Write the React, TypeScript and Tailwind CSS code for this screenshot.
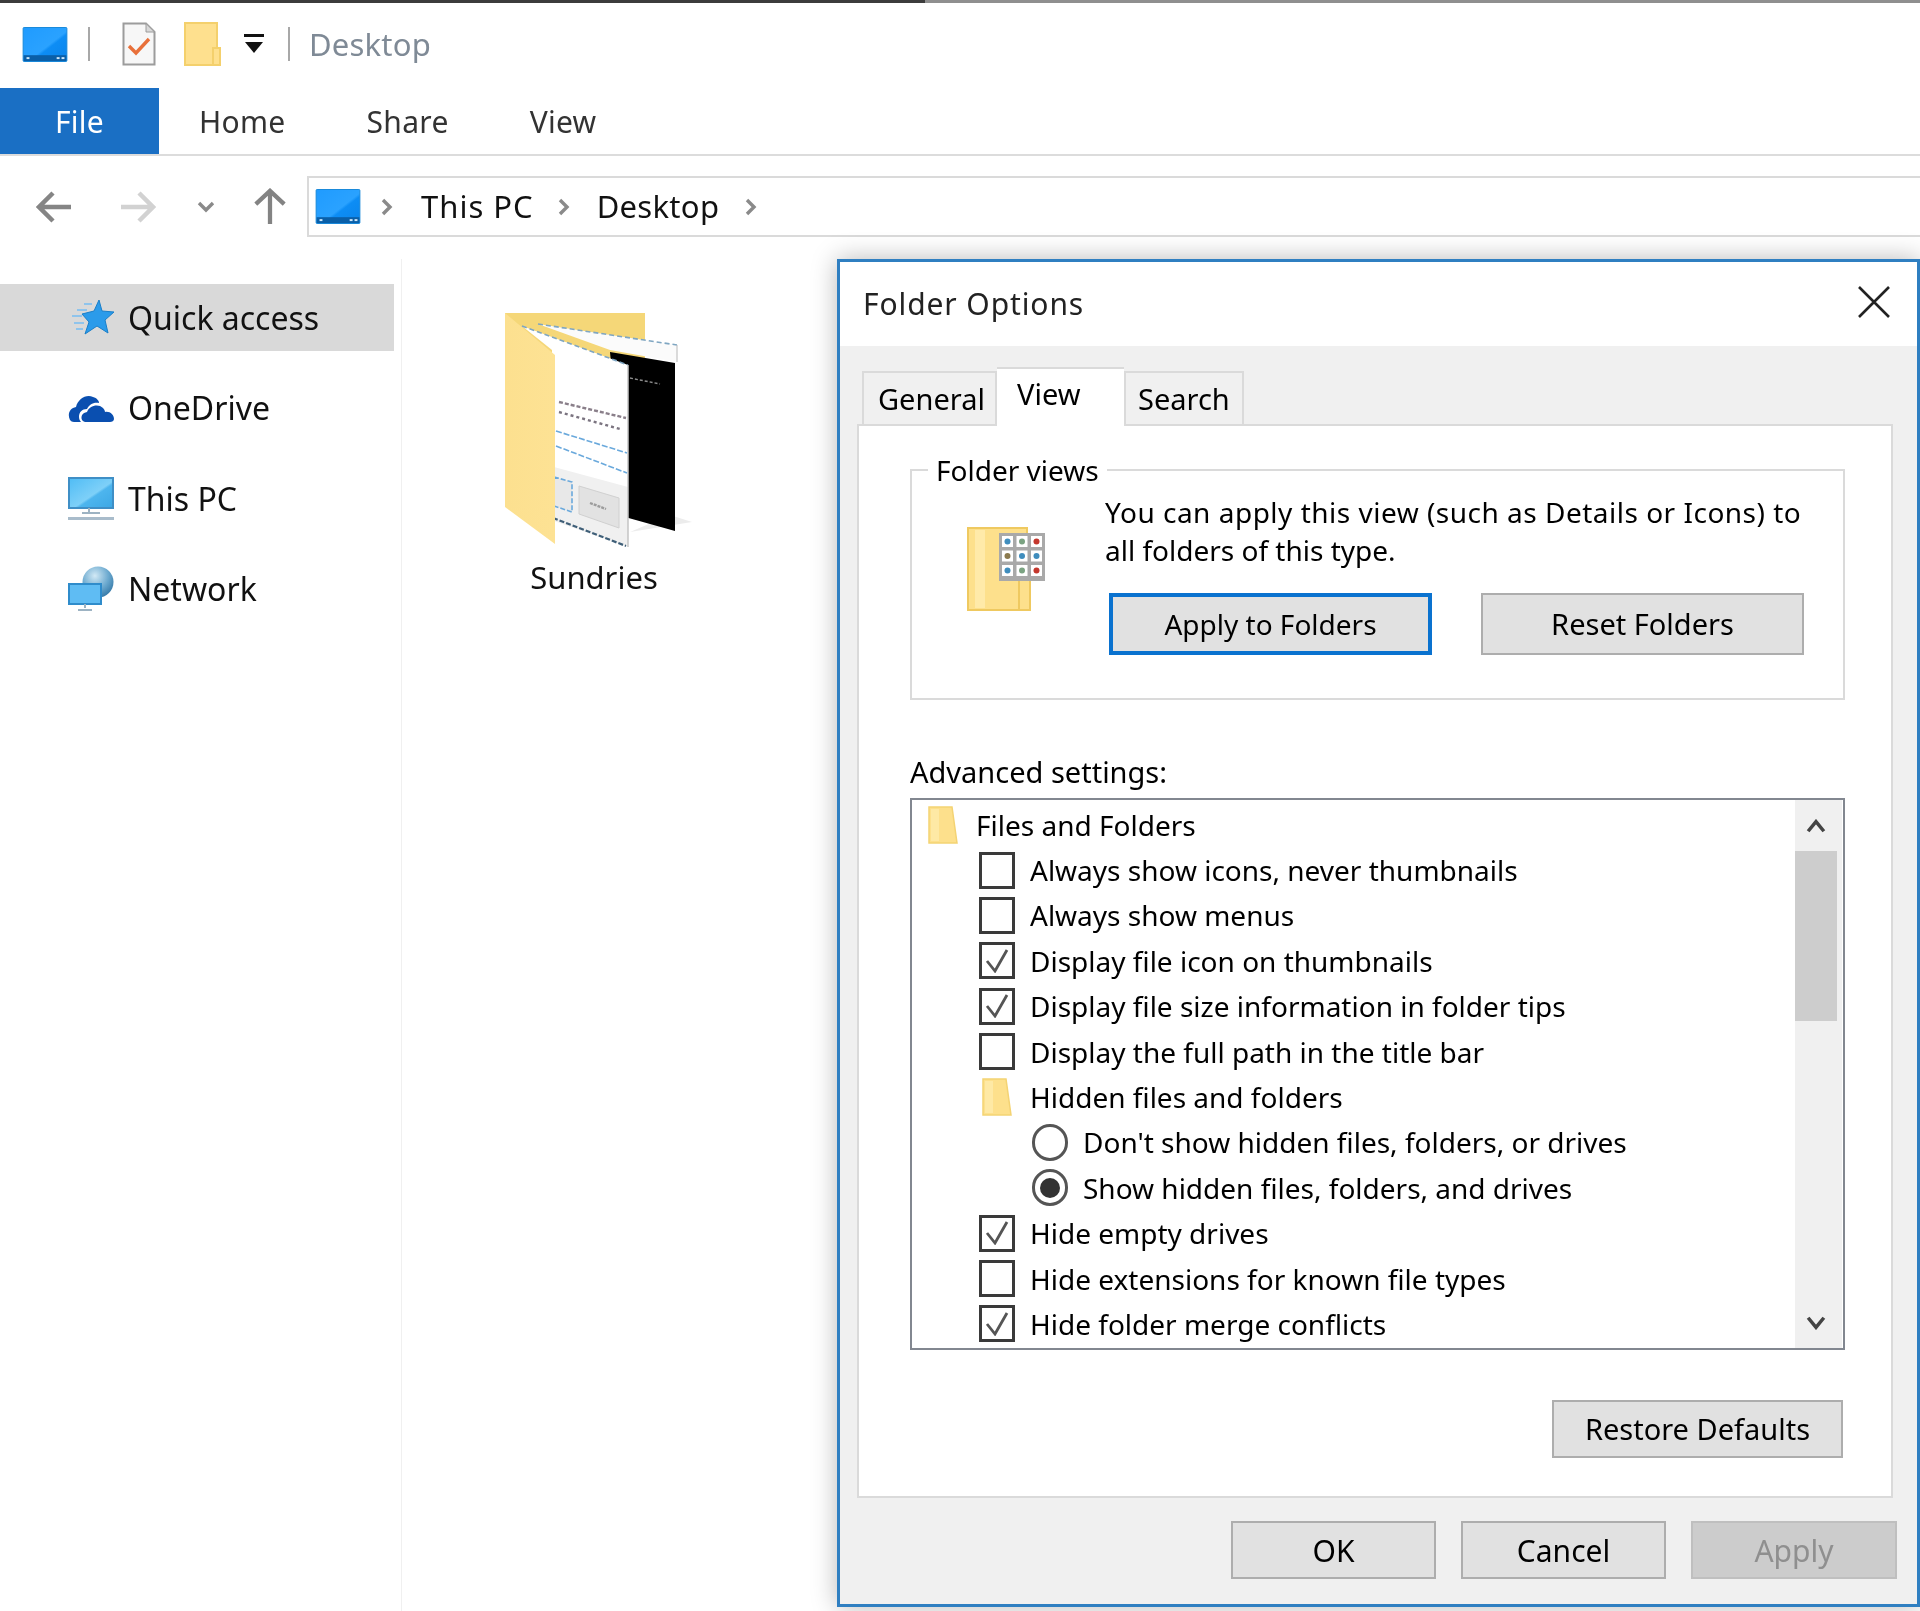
import React from "react";

const PcIcon = ({ className }: { className: string }) => (
  <svg viewBox="0 0 46 36" className={className}>
    <defs>
      <linearGradient id="pcFill" x1="0" y1="0" x2="1" y2="1">
        <stop offset="0" stopColor="#1f9bff" />
        <stop offset="0.55" stopColor="#2aa2ff" />
        <stop offset="0.6" stopColor="#0d8df5" />
        <stop offset="1" stopColor="#0b84ea" />
      </linearGradient>
    </defs>
    <rect x="0.5" y="0.5" width="45" height="35" rx="1" fill="url(#pcFill)" stroke="#1687d9" />
    <rect x="1" y="29" width="44" height="6" fill="#0a5fa8" />
    <rect x="4" y="31" width="3" height="2" fill="#cfe8fb" />
    <rect x="35" y="31" width="3" height="2" fill="#cfe8fb" />
    <rect x="40" y="31" width="3" height="2" fill="#cfe8fb" />
  </svg>
);

const DocCheckIcon = () => (
  <svg viewBox="0 0 34 44" className="w-[34px] h-[44px]">
    <path d="M1.5 1.5H24L32.5 10V42.5H1.5Z" fill="#f7f7f7" stroke="#9c9c9c" strokeWidth="2" />
    <path d="M24 1.5V10H32.5Z" fill="#d9d9d9" stroke="#9c9c9c" strokeWidth="1" />
    <path d="M7 24L14 31L27 17" fill="none" stroke="#e8703a" strokeWidth="3.4" />
  </svg>
);

const TallFolder = ({ className }: { className: string }) => (
  <svg viewBox="0 0 37 44" className={className} preserveAspectRatio="none">
    <path d="M1 1H33V26H36V43H1Z" fill="#fee08e" stroke="#f4d06c" strokeWidth="2" />
    <path d="M33 26H29V43" fill="none" stroke="#f4d06c" strokeWidth="2" />
  </svg>
);

const DropdownIcon = () => (
  <svg viewBox="0 0 22 20" className="w-[22px] h-[20px]">
    <rect x="1" y="0" width="20" height="3" fill="#111" />
    <path d="M2 8H20L11 19Z" fill="#111" />
  </svg>
);

const Arrow = ({ color, flip }: { color: string; flip?: boolean }) => (
  <svg viewBox="0 0 36 34" className={`w-9 h-[34px] ${flip ? "rotate-180" : ""}`}>
    <path d="M17 3L3 17L17 31M3 17H35" fill="none" stroke={color} strokeWidth="4.5" />
  </svg>
);

const UpArrow = () => (
  <svg viewBox="0 0 36 38" className="w-9 h-[36px] mb-[2px]">
    <path d="M3 17L18 3L33 17M18 3V38" fill="none" stroke="#838383" strokeWidth="4.5" />
  </svg>
);

const Caret = ({ down, color = "#8a8a8a" }: { down?: boolean; color?: string }) => (
  <svg viewBox="0 0 12 18" className={down ? "w-[12px] h-[18px] rotate-90" : "w-[12px] h-[18px]"}>
    <path d="M2 2L9 9L2 16" fill="none" stroke={color} strokeWidth="3.4" />
  </svg>
);

const StarIcon = () => (
  <svg viewBox="0 0 46 40" className="w-[46px] h-10">
    <path d="M31 2L34 13L46 14L37 22L40 35L29 28L17 36L21 24L14 16L26 13Z" fill="#2b9bea" stroke="#1a7fc9" strokeWidth="1" />
    <path d="M24 6H16M19 12H9M14 18H4M16 25H6M15 31H8" stroke="#8fc4ec" strokeWidth="2" />
  </svg>
);

const CloudIcon = () => (
  <svg viewBox="0 0 46 30" className="w-[46px] h-[30px]">
    <path d="M2 27C-1 21 2 15 8 14C10 6 18 1 25 4C29 5 31 8 31 10C25 9 21 12 19 16C14 16 11 19 11 24C11 26 12 28 13 29H6C4 29 3 28 2 27Z" fill="#0a4fb0" />
    <path d="M17 29C12 28 12 20 19 19C21 13 30 10 35 15C37 17 37 19 37 19C42 18 46 22 46 26C46 28 44 29 42 29Z" fill="#0a4fb0" />
  </svg>
);

const MonitorIcon = () => (
  <svg viewBox="0 0 46 44" className="w-[46px] h-[44px]">
    <defs>
      <linearGradient id="monFill" x1="0" y1="0" x2="1" y2="1">
        <stop offset="0" stopColor="#4fbcf5" />
        <stop offset="0.55" stopColor="#7ed0f8" />
        <stop offset="0.6" stopColor="#4db5ee" />
        <stop offset="1" stopColor="#3ca7e4" />
      </linearGradient>
    </defs>
    <rect x="1" y="1" width="44" height="30" fill="url(#monFill)" stroke="#3f8fc6" strokeWidth="2" />
    <path d="M21 31V35M14 36H32" stroke="#9db3c3" strokeWidth="2" />
    <rect x="0" y="40" width="46" height="3" fill="#a9bccb" />
  </svg>
);

const NetworkIcon = () => (
  <svg viewBox="0 0 46 46" className="w-[46px] h-[46px]">
    <defs>
      <radialGradient id="globeFill" cx="0.4" cy="0.3" r="0.8">
        <stop offset="0" stopColor="#d2e9f5" />
        <stop offset="0.55" stopColor="#6ba9cf" />
        <stop offset="1" stopColor="#2a6f9f" />
      </radialGradient>
    </defs>
    <circle cx="30" cy="16" r="15.5" fill="url(#globeFill)" />
    <rect x="1" y="18" width="32" height="20" fill="#5fbcf3" stroke="#2f8ccb" strokeWidth="2" />
    <path d="M17 38V42M10 44H24" stroke="#9db3c3" strokeWidth="2" />
  </svg>
);

const ThumbFolder = () => (
  <svg viewBox="0 0 240 258" className="w-[240px] h-[258px] blur-[0.6px]">
    <defs>
      <linearGradient id="flap" x1="0" y1="0" x2="1" y2="0">
        <stop offset="0" stopColor="#fce08f" />
        <stop offset="1" stopColor="#fde294" />
      </linearGradient>
    </defs>
    <path d="M150 242L212 232L190 225Z" fill="#ececec" />
    <path d="M25 23H165V90H25Z" fill="#f5d778" />
    <path d="M58 34L197 55V72L130 60Z" fill="#fbfbfb" />
    <path d="M58 34L197 55" stroke="#7fa6c2" strokeWidth="1.6" strokeDasharray="5 3" />
    <path d="M197 55V72" stroke="#b8b8b8" strokeWidth="1" />
    <path d="M130 62L195 73V241L145 227Z" fill="#000" />
    <path d="M150 88L180 94" stroke="#8c8c8c" strokeWidth="1.4" strokeDasharray="3 2" />
    <path d="M42 36L148 75V257L72 231V60Z" fill="#fff" />
    <path d="M74 177L148 197V257L74 231Z" fill="#f0f0f0" />
    <path d="M42 36L148 75" stroke="#7fa6c2" strokeWidth="1.6" strokeDasharray="5 3" />
    <path d="M73 228L146 256" stroke="#3f5f78" strokeWidth="2.2" strokeDasharray="5 2" />
    <path d="M148 75V257" stroke="#c4c4c4" strokeWidth="1.5" />
    <path d="M79 112L146 128" stroke="#8a7f8a" strokeWidth="2.4" strokeDasharray="4 2" />
    <path d="M79 122L140 139" stroke="#7b7480" strokeWidth="2.4" strokeDasharray="3 3" />
    <path d="M76 141L147 163" stroke="#6aa9dc" strokeWidth="1.6" strokeDasharray="6 2" />
    <path d="M76 156L147 183" stroke="#6aa9dc" strokeWidth="1.6" strokeDasharray="6 2" />
    <path d="M74 187L92 192V222L74 216Z" fill="#e8e8e8" stroke="#6aa9dc" strokeWidth="1.6" strokeDasharray="5 2" />
    <path d="M99 196L139 208V238L99 224Z" fill="#e2e2e2" stroke="#d0d0d0" />
    <path d="M110 213L126 219" stroke="#9c9c9c" strokeWidth="2.4" strokeDasharray="3 1" />
    <path d="M25 23L75 65V254L25 217Z" fill="url(#flap)" />
  </svg>
);

const ViewFolderIcon = () => (
  <svg viewBox="0 0 78 84" className="w-[78px] h-[84px] blur-[0.4px]">
    <path d="M1 1H60V30H63V83H1Z" fill="#fde08c" stroke="#efc960" strokeWidth="2" />
    <rect x="8" y="3" width="10" height="78" fill="#ffeeb5" opacity="0.7" />
    <path d="M52 50V83" stroke="#efc960" strokeWidth="2" />
    <rect x="32" y="6" width="46" height="48" fill="#a9a9a9" />
    {[0, 1, 2].flatMap((r) =>
      [0, 1, 2].map((c) => (
        <g key={`${r}-${c}`}>
          <rect x={35 + c * 14.5} y={9 + r * 14.5} width="11" height="11" fill="#fff" />
          <circle cx={40.5 + c * 14.5} cy={14.5 + r * 14.5} r="3" fill={c === 2 && r !== 1 ? "#c4372d" : r === 1 && c === 0 ? "#8b7a4f" : c === 1 && r !== 1 ? "#7ba382" : "#3f8dbd"} />
        </g>
      ))
    )}
  </svg>
);

const SmallFolder = () => (
  <svg viewBox="0 0 30 38" className="w-[30px] h-[38px]">
    <path d="M1 1H24L29 37H1Z" fill="#fde08c" stroke="#f4d373" strokeWidth="1.5" />
    <rect x="3" y="3" width="8" height="32" fill="#ffeeb5" opacity="0.6" />
  </svg>
);

const Checkbox = ({ on }: { on?: boolean }) => (
  <div className="w-9 h-[37px] border-[3px] border-[#3a3a3a] bg-white flex items-center justify-center shrink-0">
    {on && (
      <svg viewBox="0 0 24 24" className="w-6 h-6">
        <path d="M2 12L10 22L22 1" fill="none" stroke="#555" strokeWidth="2.8" />
      </svg>
    )}
  </div>
);

const Radio = ({ on }: { on?: boolean }) => (
  <div className="w-9 h-[37px] rounded-full border-[3px] border-[#555] bg-white flex items-center justify-center shrink-0">
    {on && <div className="w-5 h-5 rounded-full bg-[#333]" />}
  </div>
);

type Row = { kind: "folder" | "check" | "radio"; level: number; label: string; on?: boolean };

const ROWS: Row[] = [
  { kind: "folder", level: 0, label: "Files and Folders" },
  { kind: "check", level: 1, label: "Always show icons, never thumbnails" },
  { kind: "check", level: 1, label: "Always show menus" },
  { kind: "check", level: 1, label: "Display file icon on thumbnails", on: true },
  { kind: "check", level: 1, label: "Display file size information in folder tips", on: true },
  { kind: "check", level: 1, label: "Display the full path in the title bar" },
  { kind: "folder", level: 1, label: "Hidden files and folders" },
  { kind: "radio", level: 2, label: "Don't show hidden files, folders, or drives" },
  { kind: "radio", level: 2, label: "Show hidden files, folders, and drives", on: true },
  { kind: "check", level: 1, label: "Hide empty drives", on: true },
  { kind: "check", level: 1, label: "Hide extensions for known file types" },
  { kind: "check", level: 1, label: "Hide folder merge conflicts", on: true },
];

const INDENT = ["pl-[13px]", "pl-[67px]", "pl-[120px]"];

const NAV_ITEMS = [
  { label: "OneDrive", icon: <CloudIcon /> },
  { label: "This PC", icon: <MonitorIcon /> },
  { label: "Network", icon: <NetworkIcon /> },
];

const dialogBtn =
  "h-[58px] border-2 border-[#adadad] bg-[#e1e1e1] text-black text-[29px] flex items-center justify-center";

export default function App() {
  return (
    <div
      className="w-[1920px] h-[1611px] relative overflow-hidden bg-white blur-[0.5px]"
      style={{ fontFamily: '"Noto Sans", "Open Sans", sans-serif' }}
    >
      {/* window top edge */}
      <div className="flex h-[3px]">
        <div className="w-[925px] bg-[#3c3c3c]" />
        <div className="flex-1 bg-[#8f8f8f]" />
      </div>

      {/* quick access toolbar */}
      <div className="h-[85px] flex items-center pl-[22px] pb-[3px]">
        <PcIcon className="w-[46px] h-[35px]" />
        <div className="w-[2px] h-[34px] bg-[#a8a8a8] ml-[20px]" />
        <div className="ml-[32px]">
          <DocCheckIcon />
        </div>
        <TallFolder className="w-[37px] h-[44px] ml-[28px]" />
        <div className="ml-[22px]">
          <DropdownIcon />
        </div>
        <div className="w-[2px] h-[34px] bg-[#a8a8a8] ml-[23px]" />
        <span className="ml-[19px] text-[31px] text-[#7f8a96] tracking-[0.2px]">Desktop</span>
      </div>

      {/* ribbon tabs */}
      <div className="h-[68px] flex border-b-2 border-[#dcdcdc] text-[30px] tracking-[0.3px] text-[#333]">
        <div className="w-[159px] bg-[#1a6fc4] text-white flex items-center justify-center">File</div>
        <div className="flex items-center pl-[40px] gap-[81px]">
          <span>Home</span>
          <span>Share</span>
          <span>View</span>
        </div>
      </div>

      {/* address row */}
      <div className="h-[103px] flex items-start pt-[20px]">
        <div className="w-[307px] h-[61px] flex items-center pl-[36px]">
          <Arrow color="#858585" />
          <div className="ml-[48px]">
            <Arrow color="#d2d2d2" flip />
          </div>
          <div className="ml-[44px]">
            <Caret down />
          </div>
          <div className="ml-[40px]">
            <UpArrow />
          </div>
        </div>
        <div className="flex-1 h-[61px] border-2 border-r-0 border-[#dadada] flex items-center pl-[6px] text-[31px] tracking-[0.3px] text-[#111]">
          <PcIcon className="w-[46px] h-[35px]" />
          <div className="ml-[20px]">
            <Caret />
          </div>
          <span className="ml-[28px] tracking-[1px]">This PC</span>
          <div className="ml-[24px]">
            <Caret />
          </div>
          <span className="ml-[27px]">Desktop</span>
          <div className="ml-[26px]">
            <Caret />
          </div>
        </div>
      </div>

      {/* explorer body */}
      <div className="flex">
        <div className="w-[402px] h-[1352px] border-r border-[#f0f0f0] pt-[25px] pr-[7px] flex flex-col gap-[23.5px] text-[32px] text-[#111]">
          <div className="h-[67px] bg-[#d9d9d9] flex items-center pl-[68px] gap-[14px]">
            <StarIcon />
            <span>Quick access</span>
          </div>
          {NAV_ITEMS.map((item) => (
            <div key={item.label} className="h-[67px] flex items-center pl-[68px] gap-[14px]">
              {item.icon}
              <span>{item.label}</span>
            </div>
          ))}
        </div>
        <div className="pl-[78px] pt-[31px]">
          <ThumbFolder />
          <div className="w-[228px] text-center text-[31px] text-[#111] mt-[6px]">Sundries</div>
        </div>
      </div>

      {/* Folder Options dialog */}
      <div className="absolute left-[837px] top-[259px] w-[1083px] h-[1348px] border-[3px] border-[#2f7fc1] bg-[#f0f0f0] shadow-[0_0_24px_rgba(0,0,0,0.28)] flex flex-col text-[28px] text-black">
        <div className="h-[84px] bg-white flex items-center justify-between pl-[23px] pr-[26px] shrink-0">
          <span className="text-[#222] text-[30px] tracking-[0.9px] mb-[2px]">Folder Options</span>
          <svg viewBox="0 0 34 34" className="w-[34px] h-[34px] mb-[4px]">
            <path d="M2 2L32 32M32 2L2 32" stroke="#222" strokeWidth="2.6" />
          </svg>
        </div>

        <div className="flex items-end h-[78px] pl-[22px] shrink-0 text-[29px]">
          <div className="h-[53px] w-[135px] border-2 border-b-0 border-[#dadada] flex items-center pl-[14px]">General</div>
          <div className="h-[59px] w-[127px] bg-white border-t-2 border-[#dadada] flex items-start pl-[20px] pt-[3px] -mb-[2px] relative">View</div>
          <div className="h-[53px] w-[120px] border-2 border-b-0 border-[#dadada] flex items-center pl-[12px]">Search</div>
        </div>

        <div className="w-[1036px] h-[1074px] ml-[17px] border-2 border-[#dadada] bg-white pl-[51px] flex flex-col shrink-0">
          <div className="relative h-[231px] w-[935px] mt-[43px] border-2 border-[#dadada] flex pl-[55px] shrink-0">
            <span className="absolute left-[16px] -top-[19px] bg-white px-[8px] leading-[36px]">Folder views</span>
            <div className="pt-[56px]">
              <ViewFolderIcon />
            </div>
            <div className="ml-[60px] pt-[22px]">
              <p className="leading-[38px] whitespace-nowrap tracking-[0.5px]">You can apply this view (such as Details or Icons) to</p>
              <p className="leading-[38px]">all folders of this type.</p>
              <div className="flex gap-[49px] mt-[24px] ml-[4px]">
                <div className={`${dialogBtn} !h-[62px] w-[323px] !border-[4px] !border-[#0a72cf] !text-[28px]`}>Apply to Folders</div>
                <div className={`${dialogBtn} !h-[62px] w-[323px]`}>Reset Folders</div>
              </div>
            </div>
          </div>

          <div className="leading-[36px] mt-[54px] text-[29px]">Advanced settings:</div>

          <div className="w-[935px] h-[552px] mt-[8px] border-2 border-[#828790] flex shrink-0">
            <div className="flex-1 pt-[2px] overflow-hidden">
              {ROWS.map((row) => (
                <div key={row.label} className={`h-[45.4px] flex items-center gap-[15px] whitespace-nowrap ${INDENT[row.level]}`}>
                  <div className="w-9 flex justify-center shrink-0">
                    {row.kind === "folder" && <SmallFolder />}
                    {row.kind === "check" && <Checkbox on={row.on} />}
                    {row.kind === "radio" && <Radio on={row.on} />}
                  </div>
                  <span>{row.label}</span>
                </div>
              ))}
            </div>
            <div className="w-[47px] mr-[1px] bg-[#f0f0f0] flex flex-col">
              <div className="h-[51px] w-[42px] flex items-center justify-center">
                <svg viewBox="0 0 22 16" className="w-[20px] h-[14px]">
                  <path d="M2 14L11 3L20 14" fill="none" stroke="#444" strokeWidth="4" />
                </svg>
              </div>
              <div className="h-[170px] w-[42px] bg-[#cdcdcd]" />
              <div className="flex-1" />
              <div className="h-[51px] w-[42px] flex items-center justify-center">
                <svg viewBox="0 0 22 16" className="w-[20px] h-[14px]">
                  <path d="M2 2L11 13L20 2" fill="none" stroke="#444" strokeWidth="4" />
                </svg>
              </div>
            </div>
          </div>

          <div className={`${dialogBtn} w-[291px] mt-[50px] self-end mr-[48px]`}>Restore Defaults</div>
        </div>

        <div className="flex justify-end gap-[25px] pt-[23px] pr-[20px] text-[30px]">
          <div className={`${dialogBtn} w-[205px] !text-[30px]`}>OK</div>
          <div className={`${dialogBtn} w-[205px] !text-[30px]`}>Cancel</div>
          <div className={`${dialogBtn} w-[206px] !bg-[#cccccc] !border-[#bfbfbf] !text-[#8f8f8f] !text-[30px]`}>Apply</div>
        </div>
      </div>
    </div>
  );
}
